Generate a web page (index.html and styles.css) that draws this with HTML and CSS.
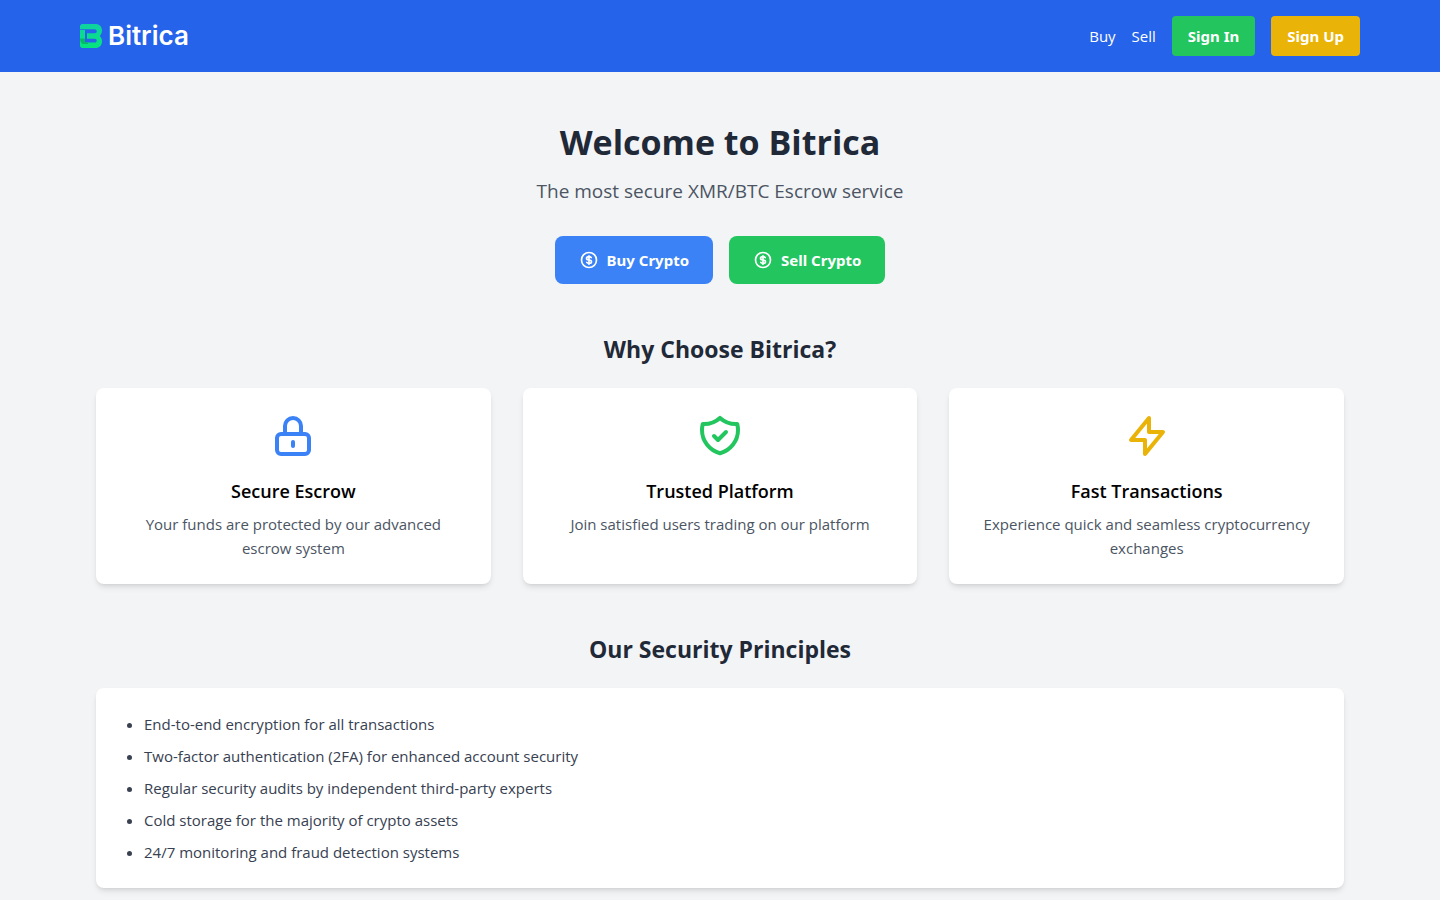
FILE: index.html
```html
<!DOCTYPE html>
<html lang="en">

<head>
    <meta charset="utf-8" />
    <meta name="viewport" content="width=device-width, initial-scale=1" />
    <title>Bitrica</title>
    <link rel="stylesheet" href="styles.css">
</head>

<body>
    <header class="navbar">
        <div class="navbar-inner">
            <a href="#" class="logo">
                <svg class="logo-mark" viewBox="0 0 22 24" aria-hidden="true">
                    <defs>
                        <linearGradient id="mark" gradientUnits="userSpaceOnUse" x1="0" y1="0" x2="0" y2="24">
                            <stop offset="0" stop-color="#0fd3a0" />
                            <stop offset="1" stop-color="#06e57c" />
                        </linearGradient>
                    </defs>
                    <path fill="url(#mark)" d="M2.500 0H15c4.500 0 7 2.700 7 6.500 0 2.200-.8 4-2.300 5.500C21.200 13.400 22 15 22 17.200c0 4-2.500 6.800-7 6.800H2.500C1 24 0 23 0 21.500V18.500h14.500c3 0 3-3.800 0-3.800H7V9.300h7.500c3 0 3-4 0-4H0V2.500C0 1 1 0 2.500 0z" />
                    <path fill="url(#mark)" d="M0 6h5v13H0z" />
                    <path fill="#04b968" d="M0 14.500h5v4h3V20H4c-2.500 0-4-2-4-5.500z" />
                </svg>
                <span class="logo-text">Bitrica</span>
            </a>
            <nav class="nav-links">
                <a href="#">Buy</a>
                <a href="#">Sell</a>
                <a href="#" class="nav-btn green">Sign In</a>
                <a href="#" class="nav-btn yellow">Sign Up</a>
            </nav>
        </div>
    </header>

    <main class="container">
        <!-- Hero -->
        <section class="hero">
            <h1>Welcome to Bitrica</h1>
            <p>The most secure XMR/BTC Escrow service</p>
            <div class="actions">
                <a href="#" class="btn blue">
                    <svg class="btn-icon" viewBox="0 0 24 24" aria-hidden="true">
                        <path d="M12 8c-1.657 0-3 .895-3 2s1.343 2 3 2 3 .895 3 2-1.343 2-3 2m0-8c1.110 0 2.080.402 2.599 1M12 8V7m0 1v8m0 0v1m0-1c-1.110 0-2.080-.402-2.599-1M21 12a9 9 0 11-18 0 9 9 0 0118 0z" />
                    </svg>
                    Buy Crypto
                </a>
                <a href="#" class="btn green">
                    <svg class="btn-icon" viewBox="0 0 24 24" aria-hidden="true">
                        <path d="M12 8c-1.657 0-3 .895-3 2s1.343 2 3 2 3 .895 3 2-1.343 2-3 2m0-8c1.110 0 2.080.402 2.599 1M12 8V7m0 1v8m0 0v1m0-1c-1.110 0-2.080-.402-2.599-1M21 12a9 9 0 11-18 0 9 9 0 0118 0z" />
                    </svg>
                    Sell Crypto
                </a>
            </div>
        </section>

        <!-- Features -->
        <section>
            <h2>Why Choose Bitrica?</h2>
            <div class="features">
                <div class="card feature">
                    <svg class="feature-icon icon-blue" viewBox="0 0 24 24" aria-hidden="true">
                        <path d="M12 15v2m-6 4h12a2 2 0 002-2v-6a2 2 0 00-2-2H6a2 2 0 00-2 2v6a2 2 0 002 2zm10-10V7a4 4 0 00-8 0v4h8z" />
                    </svg>
                    <h3>Secure Escrow</h3>
                    <p>Your funds are protected by our advanced escrow system</p>
                </div>
                <div class="card feature">
                    <svg class="feature-icon icon-green" viewBox="0 0 24 24" aria-hidden="true">
                        <path d="M9 12l2 2 4-4m5.618-4.016A11.955 11.955 0 0112 2.944a11.955 11.955 0 01-8.618 3.040A12.020 12.020 0 003 9c0 5.591 3.824 10.290 9 11.622 5.176-1.332 9-6.030 9-11.622 0-1.042-.133-2.052-.382-3.016z" />
                    </svg>
                    <h3>Trusted Platform</h3>
                    <p>Join satisfied users trading on our platform</p>
                </div>
                <div class="card feature">
                    <svg class="feature-icon icon-yellow" viewBox="0 0 24 24" aria-hidden="true">
                        <path d="M13 10V3L4 14h7v7l9-11h-7z" />
                    </svg>
                    <h3>Fast Transactions</h3>
                    <p>Experience quick and seamless cryptocurrency exchanges</p>
                </div>
            </div>
        </section>

        <!-- Security -->
        <section>
            <h2>Our Security Principles</h2>
            <div class="card">
                <ul class="principles">
                    <li>End-to-end encryption for all transactions</li>
                    <li>Two-factor authentication (2FA) for enhanced account security</li>
                    <li>Regular security audits by independent third-party experts</li>
                    <li>Cold storage for the majority of crypto assets</li>
                    <li>24/7 monitoring and fraud detection systems</li>
                </ul>
            </div>
        </section>
    </main>
</body>

</html>
```
FILE: styles.css
```css
* {
    box-sizing: border-box;
    margin: 0;
    padding: 0;
}

body {
    font-family: "Open Sans", "Noto Sans", sans-serif;
    font-size: 15px;
    line-height: 24px;
    color: #1f2937;
    background-color: #f3f4f6;
}

a {
    color: inherit;
    text-decoration: none;
}

/* Navbar */
.navbar {
    background-color: #2563eb;
    color: #ffffff;
}

.navbar-inner {
    display: flex;
    align-items: center;
    justify-content: space-between;
    max-width: 1280px;
    margin: 0 auto;
    padding: 16px 0;
}

.logo {
    display: flex;
    align-items: center;
    gap: 6px;
}

.logo-mark {
    width: 22px;
    height: 24px;
}

.logo-text {
    font-family: Inter, sans-serif;
    font-size: 26px;
    font-weight: 600;
}

.nav-links {
    display: flex;
    align-items: center;
    gap: 16px;
}

.nav-btn,
.btn {
    font-family: "Noto Sans", sans-serif;
    font-weight: 700;
}

.nav-btn {
    padding: 8px 16px;
    border-radius: 4px;
}

.blue {
    background-color: #3b82f6;
}

.green {
    background-color: #22c55e;
}

.yellow {
    background-color: #eab308;
}

/* Content */
.container {
    display: flex;
    flex-direction: column;
    gap: 48px;
    max-width: 1280px;
    margin: 0 auto;
    padding: 48px 16px;
}

.hero {
    text-align: center;
}

h1 {
    margin-bottom: 12px;
    font-size: 34px;
    line-height: 44px;
}

.hero p {
    margin-bottom: 30px;
    font-size: 19px;
    line-height: 30px;
    color: #4b5563;
}

.actions {
    display: flex;
    justify-content: center;
    gap: 16px;
}

.btn {
    display: flex;
    align-items: center;
    gap: 8px;
    padding: 12px 24px;
    border-radius: 8px;
    color: #ffffff;
}

svg {
    flex-shrink: 0;
}

.btn-icon,
.feature-icon {
    fill: none;
    stroke: currentColor;
    stroke-width: 2;
    stroke-linecap: round;
    stroke-linejoin: round;
}

.btn-icon {
    width: 20px;
    height: 20px;
}

h2 {
    margin-bottom: 22px;
    font-size: 23px;
    line-height: 34px;
    text-align: center;
}

.card {
    padding: 24px;
    border-radius: 8px;
    background-color: #ffffff;
    box-shadow: 0 4px 6px -1px rgba(0, 0, 0, 0.1), 0 2px 4px -2px rgba(0, 0, 0, 0.1);
}

.features {
    display: grid;
    grid-template-columns: repeat(3, 1fr);
    gap: 32px;
}

.feature {
    text-align: center;
    color: #4b5563;
}

.feature-icon {
    display: block;
    width: 48px;
    height: 48px;
    margin: 0 auto 16px;
}

.icon-blue {
    color: #3b82f6;
}

.icon-green {
    color: #22c55e;
}

.icon-yellow {
    color: #eab308;
}

h3 {
    margin-bottom: 6px;
    font-size: 18px;
    font-weight: 600;
    line-height: 30px;
    color: #000000;
}

.principles {
    display: flex;
    flex-direction: column;
    gap: 8px;
    padding-left: 24px;
    color: #374151;
}

@media (max-width: 768px) {
    .navbar-inner {
        padding: 16px;
    }

    .features {
        grid-template-columns: 1fr;
    }
}
```
